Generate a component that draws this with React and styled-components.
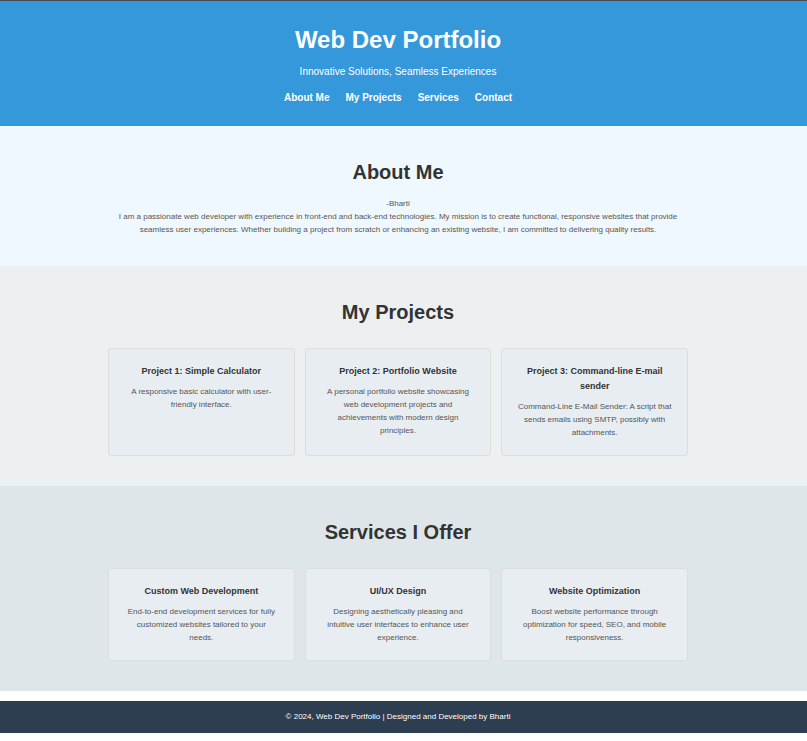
import React from "react";
import styled, { createGlobalStyle } from "styled-components";

const GlobalStyle = createGlobalStyle`
  * {
    box-sizing: border-box;
    margin: 0;
    padding: 0;
  }
  body {
    font-family: "Liberation Sans", Arial, sans-serif;
    font-size: 8px;
    line-height: 13px;
    color: #333;
    background: #fff;
  }
`;

const Header = styled.header`
  border-top: 1px solid #4d4a57;
  padding: 20px 11px 20px 0;
  background: #3498db;
  color: #fff;
  text-align: center;
`;

const SiteTitle = styled.h1`
  margin-bottom: 5px;
  font-size: 24px;
  line-height: 38px;
`;

const Tagline = styled.p`
  font-size: 10px;
  line-height: 16px;
`;

const Nav = styled.nav`
  display: flex;
  justify-content: center;
  gap: 16px;
  margin-top: 10px;
`;

const NavLink = styled.a`
  color: #fff;
  font-size: 10px;
  font-weight: bold;
  line-height: 16px;
  text-decoration: none;
`;

const Section = styled.section`
  padding: 30px 11px 30px 0;
  background: ${({ $background }) => $background};
  text-align: center;
`;

const Container = styled.div`
  max-width: 580px;
  margin: 0 auto;
`;

const SectionTitle = styled.h2`
  margin-bottom: ${({ $gap }) => $gap}px;
  font-size: 20px;
  line-height: 32px;
`;

const Text = styled.p`
  color: #555;
`;

const CardGrid = styled.div`
  display: grid;
  grid-template-columns: repeat(3, 1fr);
  gap: 10px;
`;

const Card = styled.article`
  padding: 15px 15px 16px;
  border: 1px solid #ddd;
  border-radius: 3px;
  background: #e8edf2;
`;

const CardTitle = styled.h3`
  margin-bottom: 6px;
  font-size: 9px;
  line-height: 15px;
`;

const Footer = styled.footer`
  margin-top: 10px;
  padding: 10px 11px 10px 0;
  background: #2c3e50;
  color: #fff;
  line-height: 12px;
  text-align: center;
`;

const links = [
  ["About Me", "#about"],
  ["My Projects", "#projects"],
  ["Services", "#services"],
  ["Contact", "#contact"],
];

const projects = [
  {
    title: "Project 1: Simple Calculator",
    text: "A responsive basic calculator with user-friendly interface.",
  },
  {
    title: "Project 2: Portfolio Website",
    text: "A personal portfolio website showcasing web development projects and achievements with modern design principles.",
  },
  {
    title: "Project 3: Command-line E-mail sender",
    text: "Command-Line E-Mail Sender: A script that sends emails using SMTP, possibly with attachments.",
  },
];

const services = [
  {
    title: "Custom Web Development",
    text: "End-to-end development services for fully customized websites tailored to your needs.",
  },
  {
    title: "UI/UX Design",
    text: "Designing aesthetically pleasing and intuitive user interfaces to enhance user experience.",
  },
  {
    title: "Website Optimization",
    text: "Boost website performance through optimization for speed, SEO, and mobile responsiveness.",
  },
];

function CardSection({ id, title, background, items }) {
  return (
    <Section id={id} $background={background}>
      <Container>
        <SectionTitle $gap={20}>{title}</SectionTitle>
        <CardGrid>
          {items.map((item) => (
            <Card key={item.title}>
              <CardTitle>{item.title}</CardTitle>
              <Text>{item.text}</Text>
            </Card>
          ))}
        </CardGrid>
      </Container>
    </Section>
  );
}

export default function App() {
  return (
    <>
      <GlobalStyle />
      <Header>
        <SiteTitle>Web Dev Portfolio</SiteTitle>
        <Tagline>Innovative Solutions, Seamless Experiences</Tagline>
        <Nav>
          {links.map(([label, href]) => (
            <NavLink key={href} href={href}>
              {label}
            </NavLink>
          ))}
        </Nav>
      </Header>
      <main>
        <Section id="about" $background="#f0f8ff">
          <Container>
            <SectionTitle $gap={9}>About Me</SectionTitle>
            <Text>-Bharti</Text>
            <Text>
              I am a passionate web developer with experience in front-end and
              back-end technologies. My mission is to create functional,
              responsive websites that provide seamless user experiences.
              Whether building a project from scratch or enhancing an existing
              website, I am committed to delivering quality results.
            </Text>
          </Container>
        </Section>
        <CardSection
          id="projects"
          title="My Projects"
          background="#ecf0f1"
          items={projects}
        />
        <CardSection
          id="services"
          title="Services I Offer"
          background="#dfe6e9"
          items={services}
        />
      </main>
      <Footer id="contact">
        <p>© 2024, Web Dev Portfolio | Designed and Developed by Bharti</p>
      </Footer>
    </>
  );
}
